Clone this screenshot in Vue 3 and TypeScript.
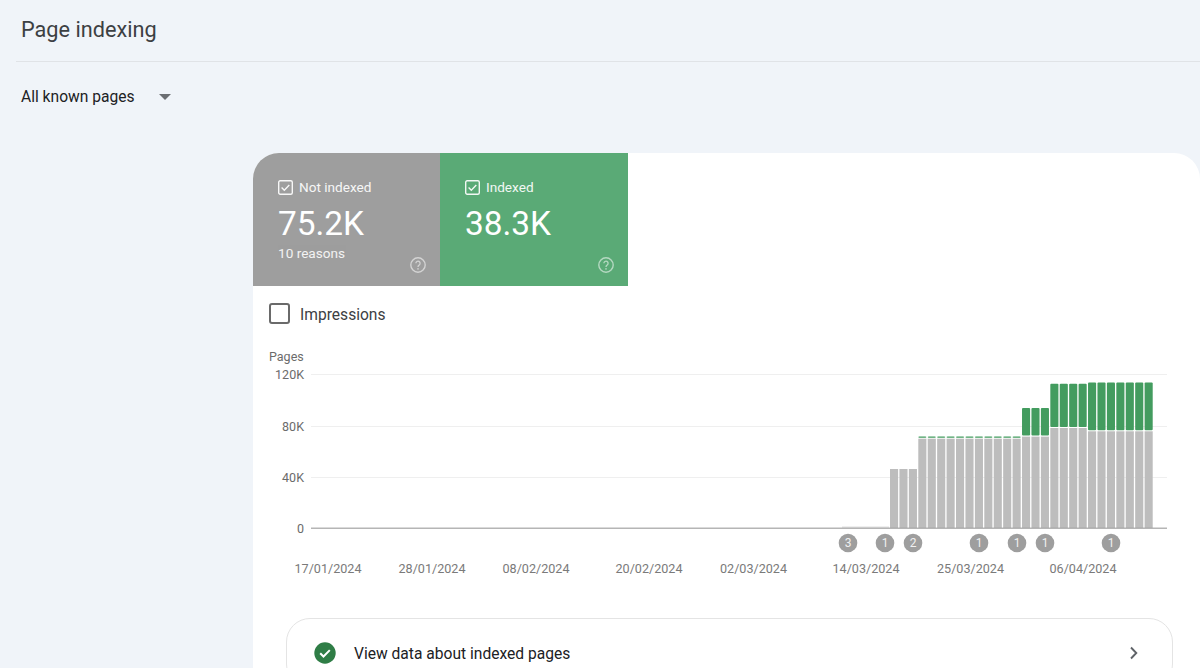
<script setup lang="ts">
interface Bar { x: number; grayTop: number; greenTop: number | null }
const baseY = 528
const pitch = 9.43
const groups: { n: number; gray: number; green: number | null }[] = [
  { n: 3, gray: 469, green: null },
  { n: 11, gray: 438.7, green: 436.4 },
  { n: 3, gray: 436.6, green: 408 },
  { n: 4, gray: 428, green: 383.7 },
  { n: 7, gray: 431.3, green: 382.4 },
]
const bars: Bar[] = []
let idx = 0
for (const g of groups) {
  for (let i = 0; i < g.n; i++) {
    bars.push({ x: 890 + idx * pitch, grayTop: g.gray, greenTop: g.green })
    idx++
  }
}
const gridLines = [
  { y: 374, label: '120K' },
  { y: 426, label: '80K' },
  { y: 477, label: '40K' },
]
const dates = [
  { x: 328, t: '17/01/2024' },
  { x: 432, t: '28/01/2024' },
  { x: 536, t: '08/02/2024' },
  { x: 649, t: '20/02/2024' },
  { x: 753.5, t: '02/03/2024' },
  { x: 866, t: '14/03/2024' },
  { x: 970.5, t: '25/03/2024' },
  { x: 1083, t: '06/04/2024' },
]
const markers = [
  { x: 848, t: '3' },
  { x: 885, t: '1' },
  { x: 913, t: '2' },
  { x: 979, t: '1' },
  { x: 1017, t: '1' },
  { x: 1045, t: '1' },
  { x: 1111, t: '1' },
]
const tiles = [
  { cls: 'gray', label: 'Not indexed', value: '75.2K', sub: '10 reasons' },
  { cls: 'green', label: 'Indexed', value: '38.3K', sub: '' },
]
</script>

<template>
  <div class="page">
    <h1 class="title">Page indexing</h1>
    <div class="filter">
      <span>All known pages</span>
      <span class="caret"></span>
    </div>
    <main class="card">
      <div class="tiles">
        <div v-for="t in tiles" :key="t.label" class="tile" :class="t.cls">
          <div class="tile-label">
            <svg class="check" width="15" height="15" viewBox="0 0 15 15">
              <rect x="0.7" y="0.7" width="13.6" height="13.6" rx="1.5" fill="none" stroke="currentColor" stroke-width="1.4" />
              <path d="M3.6 7.6l2.7 2.7 5-5.3" fill="none" stroke="currentColor" stroke-width="1.4" />
            </svg>
            <span>{{ t.label }}</span>
          </div>
          <div class="tile-value">{{ t.value }}</div>
          <div class="tile-sub">{{ t.sub }}</div>
          <svg class="help" width="16" height="16" viewBox="0 0 16 16">
            <circle cx="8" cy="8" r="7.2" fill="none" stroke="currentColor" stroke-width="1.4" />
            <path d="M5.9 6.3a2.1 2.1 0 1 1 3.3 1.7c-.8.55-1.2.9-1.2 1.9" fill="none" stroke="currentColor" stroke-width="1.3" />
            <circle cx="8" cy="11.9" r=".8" fill="currentColor" />
          </svg>
        </div>
      </div>
      <label class="impressions">
        <span class="box"></span>
        <span class="nudge">Impressions</span>
      </label>
      <svg class="chart" width="947" height="240" viewBox="253 340 947 240">
        <text x="269" y="361" class="axis-label">Pages</text>
        <g v-for="g in gridLines" :key="g.y">
          <line x1="311" x2="1167" :y1="g.y + 0.5" :y2="g.y + 0.5" stroke="#efefef" />
          <text x="304" :y="g.y + 4.5" text-anchor="end" class="axis-label">{{ g.label }}</text>
        </g>
        <text x="304" y="532.5" text-anchor="end" class="axis-label">0</text>
        <rect x="842" y="526.6" width="47" height="1" fill="#d8d8d8" />
        <g v-for="b in bars" :key="b.x">
          <rect v-if="b.greenTop !== null" :x="b.x" :y="b.greenTop" width="8.1" :height="b.grayTop - b.greenTop - 1" rx="1" fill="#439c5f" />
          <rect :x="b.x" :y="b.grayTop" width="8.1" :height="baseY - b.grayTop" fill="#bdbdbd" />
        </g>
        <rect x="311" y="527.6" width="856" height="1.2" fill="#a3a3a3" />
        <g v-for="m in markers" :key="m.x">
          <circle :cx="m.x" cy="543" r="9.3" fill="#9e9e9e" />
          <text :x="m.x" y="547" text-anchor="middle" class="marker">{{ m.t }}</text>
        </g>
        <text v-for="d in dates" :key="d.t" :x="d.x" y="573" text-anchor="middle" class="date">{{ d.t }}</text>
      </svg>
      <div class="row">
        <svg class="ok" width="22" height="22" viewBox="0 0 22 22">
          <circle cx="11" cy="11" r="10.7" fill="#2f7d46" />
          <path d="M6.2 11.2l3.3 3.3 6.3-6.4" fill="none" stroke="#fff" stroke-width="2" />
        </svg>
        <span class="row-text nudge">View data about indexed pages</span>
        <svg class="chev" width="10" height="14" viewBox="0 0 10 14">
          <path d="M2 1.5L7.3 7 2 12.5" fill="none" stroke="#5f6368" stroke-width="1.9" />
        </svg>
      </div>
    </main>
  </div>
</template>

<style>
html, body { margin: 0; background: #f0f4f9; }
</style>

<style scoped>
.page {
  width: 1200px;
  height: 668px;
  overflow: hidden;
  background: #f0f4f9;
  font-family: Roboto, "Liberation Sans", sans-serif;
  color: #3c4043;
}
.title {
  margin: 0 0 0 16px;
  padding: 16px 0 0 5px;
  height: 45px;
  box-sizing: content-box;
  border-bottom: 1px solid #e0e3e7;
  font-size: 21.7px;
  line-height: 28px;
  font-weight: 400;
}
.filter {
  display: flex;
  align-items: center;
  height: 24px;
  margin-top: 23px;
  padding-left: 21px;
  font-size: 15.6px;
  color: #202124;
}
.caret {
  margin-left: 24px;
  width: 0;
  height: 0;
  border-left: 6.5px solid transparent;
  border-right: 6.5px solid transparent;
  border-top: 6.5px solid #6b6e72;
}
.card {
  margin: 44px 0 0 253px;
  width: 947px;
  height: 560px;
  background: #fff;
  border-radius: 26px 26px 0 0;
  overflow: hidden;
}
.tiles { display: flex; }
.tile {
  position: relative;
  width: 188px;
  height: 133px;
  box-sizing: border-box;
  padding: 26px 0 0 25px;
  color: #fff;
}
.tile.gray { background: #9e9e9e; width: 187px; }
.tile.green { background: #5aaa76; }
.tile-label {
  display: flex;
  align-items: center;
  gap: 6px;
  height: 16px;
  font-size: 13.6px;
  opacity: 0.92;
}
.check { flex: none; }
.tile-value {
  margin-top: 8px;
  font-size: 33.4px;
  line-height: 42px;
}
.tile-sub {
  margin-top: -1px;
  font-size: 13.6px;
  line-height: 18px;
  opacity: 0.88;
}
.help {
  position: absolute;
  right: 14px;
  bottom: 13px;
  opacity: 0.55;
}
.impressions {
  display: flex;
  align-items: center;
  gap: 10px;
  height: 21px;
  margin: 17px 0 0 16px;
  font-size: 15.6px;
  color: #3c4043;
}
.nudge { padding-top: 2px; }
.box {
  width: 17px;
  height: 17px;
  border: 2px solid #6a6a6a;
  border-radius: 3px;
}
.chart {
  display: block;
  margin-top: 16px;
}
.axis-label { font-size: 12.5px; fill: #6b6b6b; }
.date { font-size: 12.6px; fill: #7a7a7a; }
.marker { font-size: 12px; fill: #f0f0f0; }
.row {
  display: flex;
  align-items: center;
  height: 70px;
  margin: 38px 27px 0 33px;
  box-sizing: border-box;
  padding: 0 33px 0 27px;
  border: 1px solid #e4e4e4;
  border-radius: 24px;
  font-size: 15.6px;
  color: #202124;
}
.row-text { margin-left: 18px; flex: 1; }
</style>
